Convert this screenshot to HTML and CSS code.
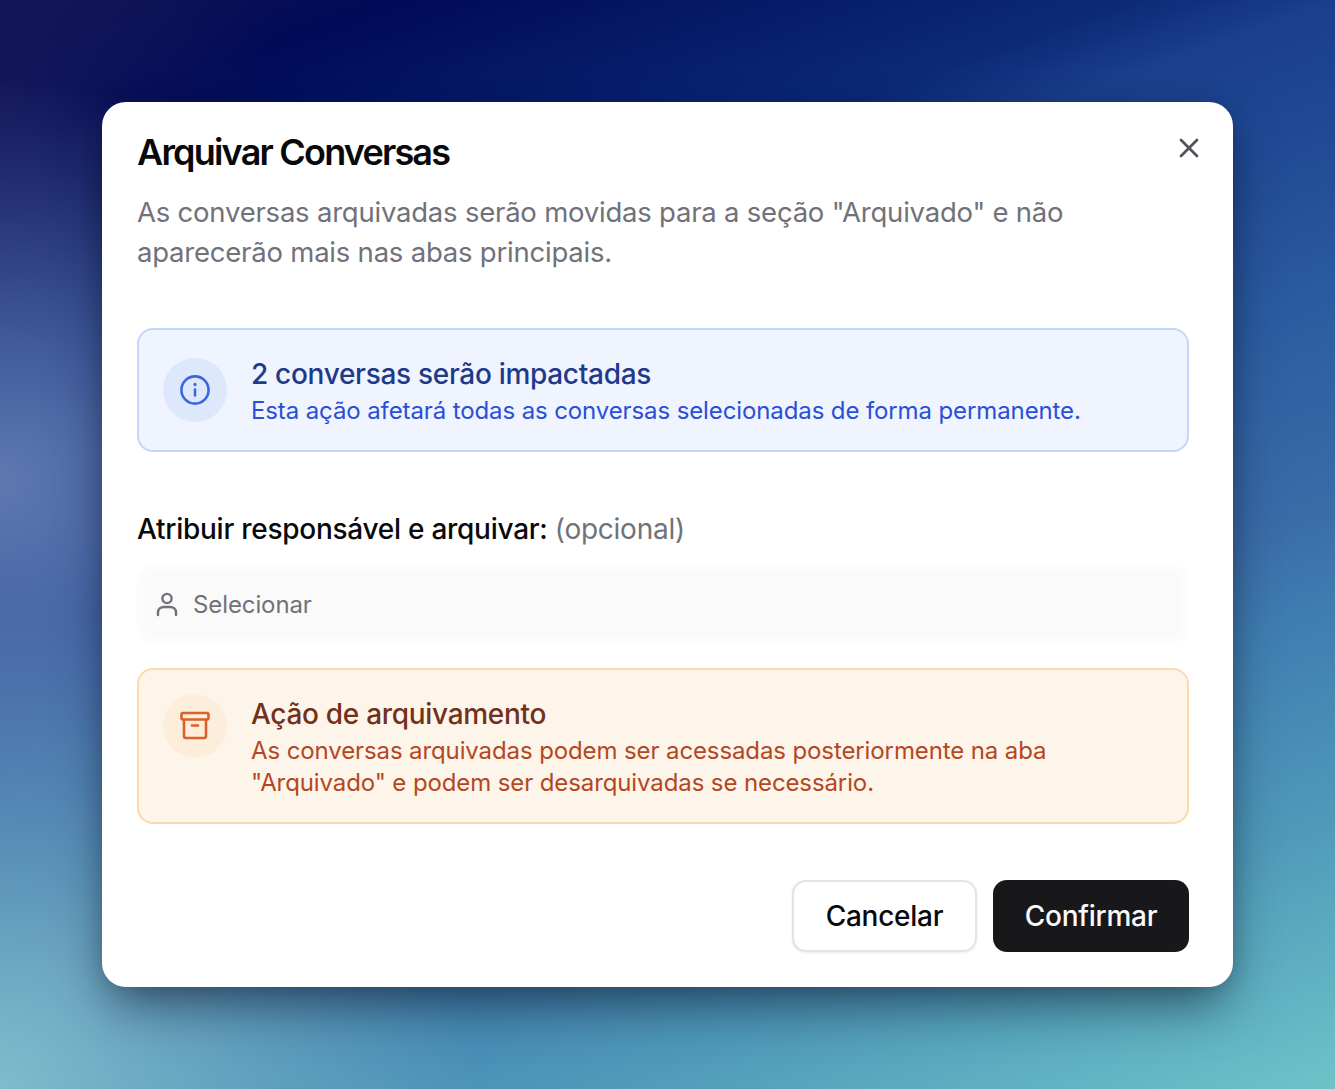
FILE: index.html
```html
<!DOCTYPE html>
<html lang="pt-BR">
<head>
    <meta charset="UTF-8">
    <title>Arquivar Conversas</title>
    <link rel="stylesheet" href="styles.css">
</head>
<body>
    <div class="modal">
        <button class="close" aria-label="Fechar">
            <svg width="28" height="28" viewBox="0 0 28 28" fill="none" stroke="#52525b" stroke-width="2.800" stroke-linecap="round"><path d="M6 6l16 16M22 6L6 22"/></svg>
        </button>
        <h1 class="title">Arquivar Conversas</h1>
        <p class="desc">As conversas arquivadas serão movidas para a seção "Arquivado" e não aparecerão mais nas abas principais.</p>

        <div class="notice notice-blue">
            <div class="notice-icon">
                <svg width="32" height="32" viewBox="0 0 32 32" fill="none" stroke="#3b66e0" stroke-width="2.600" stroke-linecap="round"><circle cx="16" cy="16" r="13.600"/><path d="M16 15.500v6"/><path d="M16 10.400v.2" stroke-width="3.200"/></svg>
            </div>
            <div>
                <div class="notice-title">2 conversas serão impactadas</div>
                <div class="notice-text">Esta ação afetará todas as conversas selecionadas de forma permanente.</div>
            </div>
        </div>

        <label class="field-label">Atribuir responsável e arquivar: <span class="optional">(opcional)</span></label>
        <div class="select-outer">
            <div class="select">
                <svg width="22" height="26" viewBox="0 0 22 26" fill="none" stroke="#71717a" stroke-width="2.400" stroke-linecap="round"><circle cx="11" cy="7.500" r="4.600"/><path d="M2 24v-2.500C2 18 4.500 16 8 16h6c3.500 0 6 2 6 5.500V24"/></svg>
                <span>Selecionar</span>
            </div>
        </div>

        <div class="notice notice-orange">
            <div class="notice-icon">
                <svg width="32" height="32" viewBox="0 0 32 32" fill="none" stroke="#d9622b" stroke-width="2.600" stroke-linecap="round" stroke-linejoin="round"><rect x="2.500" y="3" width="27" height="6.500" rx="1.500"/><path d="M5 9.500V26a2 2 0 0 0 2 2h18a2 2 0 0 0 2-2V9.500"/><path d="M13 15.500h6"/></svg>
            </div>
            <div>
                <div class="notice-title">Ação de arquivamento</div>
                <div class="notice-text">As conversas arquivadas podem ser acessadas posteriormente na aba<br>"Arquivado" e podem ser desarquivadas se necessário.</div>
            </div>
        </div>

        <div class="actions">
            <button class="btn btn-cancel">Cancelar</button>
            <button class="btn btn-confirm">Confirmar</button>
        </div>
    </div>
</body>
</html>
```

FILE: styles.css
```css
* {
    box-sizing: border-box;
}
html, body {
    height: 100%;
}
body {
    margin: 0;
    padding: 102px;
    height: 1089px;
    overflow: hidden;
    font-family: Inter, "Noto Sans", sans-serif;
    background:
        radial-gradient(circle 480px at 0 1089px, #80bccb 0%, rgba(128, 188, 203, 0) 100%),
        radial-gradient(ellipse 420px 400px at 0 480px, #5f78b0 0%, rgba(95, 120, 176, 0) 100%),
        radial-gradient(circle 280px at 0 90px, #12175a 0%, rgba(18, 23, 90, 0) 100%),
        linear-gradient(160deg, #10164f 0%, #000a58 9.300%, #0c2a78 26.300%, #1a3f8c 30.900%, #1f4793 37.200%, #2c5ea2 51.200%, #3a6ca8 62.800%, #3f7cb0 68.900%, #4f9aba 83%, #6cc4c8 100%);
}
.modal {
    position: relative;
    width: 1131px;
    height: 885px;
    padding: 27px 44px 35px 35px;
    background: #fff;
    border-radius: 24px;
    box-shadow: 0 25px 50px -8px rgba(0, 0, 20, 0.5), 0 0 20px rgba(0, 0, 20, 0.12);
}
.close {
    position: absolute;
    top: 32px;
    right: 30px;
    padding: 0;
    border: 0;
    background: none;
    display: flex;
}
.title {
    margin: 0;
    font-size: 36px;
    line-height: 46px;
    font-weight: 600;
    letter-spacing: -1.800px;
    color: #09090b;
}
.desc {
    margin: 17px 0 0;
    max-width: 960px;
    font-size: 27.500px;
    line-height: 40px;
    letter-spacing: -0.220px;
    color: #71717a;
}
.notice {
    width: 1052px;
    display: flex;
    gap: 24px;
    padding: 28px 24px;
    border-radius: 16px;
    border: 2px solid;
}
.notice-blue {
    margin-top: 56px;
    height: 124px;
    background: #eff4fe;
    border-color: #c0d8fa;
}
.notice-orange {
    margin-top: 25px;
    height: 156px;
    background: #fef5ea;
    border-color: #f9dbad;
}
.notice-icon {
    flex: none;
    width: 64px;
    height: 64px;
    border-radius: 50%;
    display: flex;
    align-items: center;
    justify-content: center;
}
.notice-blue .notice-icon {
    background: #dee8fc;
}
.notice-orange .notice-icon {
    margin-top: -4px;
    background: #fdeedb;
}
.notice-title {
    font-size: 28px;
    line-height: 34px;
    font-weight: 500;
    letter-spacing: -0.300px;
    margin-top: -1px;
}
.notice-text {
    font-size: 24px;
    line-height: 32px;
    letter-spacing: -0.110px;
    margin-top: 4px;
}
.notice-blue .notice-title {
    color: #1f3a8a;
}
.notice-blue .notice-text {
    color: #2a4fd7;
}
.notice-orange .notice-title {
    color: #73301a;
}
.notice-orange .notice-text {
    color: #b4471f;
}
.field-label {
    display: block;
    margin-top: 60px;
    font-size: 28px;
    line-height: 34px;
    font-weight: 500;
    letter-spacing: -0.260px;
    color: #09090b;
}
.optional {
    font-weight: 400;
    color: #71717a;
}
.select-outer {
    width: 1052px;
    height: 78px;
    margin-top: 19px;
    padding: 6px 7px;
    border-radius: 16px;
    background: #fcfcfc;
}
.select {
    height: 66px;
    display: flex;
    align-items: center;
    gap: 15px;
    padding: 0 12px;
    border-radius: 12px;
    background: #fafafa;
    font-size: 24px;
    letter-spacing: -0.100px;
    color: #71717a;
}
.actions {
    display: flex;
    justify-content: flex-end;
    gap: 16px;
    width: 1052px;
    margin-top: 56px;
}
.btn {
    height: 72px;
    border-radius: 14px;
    font-family: inherit;
    font-size: 28px;
    font-weight: 500;
    letter-spacing: -0.250px;
}
.btn-cancel {
    width: 185px;
    background: #fff;
    border: 2px solid #e4e4e7;
    color: #09090b;
    box-shadow: 0 1px 3px rgba(0, 0, 0, 0.08);
}
.btn-confirm {
    width: 196px;
    background: #18181b;
    border: 0;
    color: #fafafa;
}
```
